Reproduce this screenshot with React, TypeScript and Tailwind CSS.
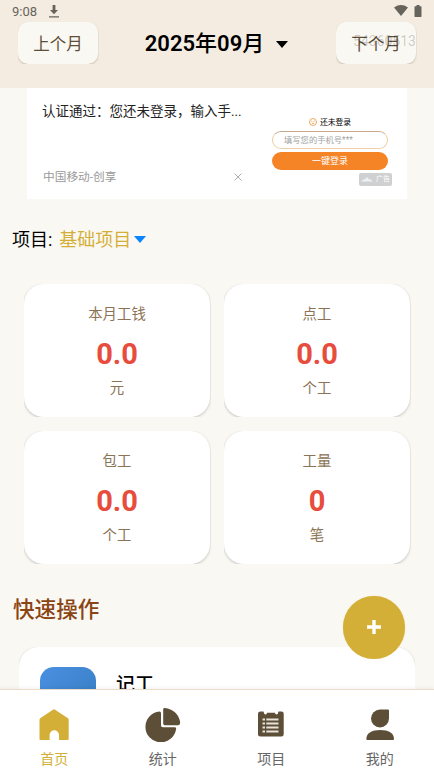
import React from 'react';

interface StatCardProps {
  title: string;
  value: string;
  unit: string;
}

interface TabItem {
  label: string;
  active?: boolean;
  icon: React.ReactNode;
}

const stats: StatCardProps[] = [
  { title: '本月工钱', value: '0.0', unit: '元' },
  { title: '点工', value: '0.0', unit: '个工' },
  { title: '包工', value: '0.0', unit: '个工' },
  { title: '工量', value: '0', unit: '笔' },
];

const HomeIcon = () => (
  <svg viewBox="0 0 36 36" className="w-9 h-9 fill-[#d4af37]">
    <path d="M17.300 3.400 Q18 2.900 18.700 3.400 L32 12.300 Q32.700 12.800 32.700 13.800 V33.300 Q32.700 34 32 34 H23 V29 A4.700 4.700 0 0 0 13.600 29 V34 H4.200 Q3.500 34 3.500 33.300 V13.800 Q3.500 12.800 4.200 12.300 Z" />
  </svg>
);

const PieIcon = () => (
  <svg viewBox="0 0 36 36" className="w-9 h-9 fill-[#5d4e37]">
    <path d="M14.500 5.600 Q16 5.600 16 7.200 V19.500 Q16 21.300 17.800 21.300 H29.500 Q31.500 21.300 31.100 23 A15.400 15.400 0 1 1 14.500 5.600 Z" />
    <path d="M18.200 3.300 Q18.200 1.700 19.800 1.900 A17 17 0 0 1 35.200 16.800 Q35.200 19.200 33.200 19.200 H19.800 Q18.200 19.200 18.200 17.600 Z" />
  </svg>
);

const NotesIcon = () => (
  <svg viewBox="0 0 36 36" className="w-9 h-9">
    <path
      fill="#5d4e37"
      d="M7.500 5.500 H10.500 Q11 8.500 12.500 8.500 Q14 8.500 14 6.700 H22 Q22 8.500 23.500 8.500 Q25 8.500 25.500 5.500 H28.500 Q30.700 5.500 30.700 7.700 V28 Q30.700 30.500 28.500 30.500 H7.500 Q5 30.500 5 28 V7.700 Q5 5.500 7.500 5.500 Z"
    />
    <path
      stroke="#e8e4da"
      strokeWidth="1.800"
      d="M9.500 13.500 H12 M13.300 13.500 H25.500 M9.500 17.500 H12 M13.300 17.500 H25.500 M9.500 21.500 H12 M13.300 21.500 H25.500 M9.500 25.500 H12 M13.300 25.500 H25.500"
    />
  </svg>
);

const UserIcon = () => (
  <svg viewBox="0 0 36 36" className="w-9 h-9 fill-[#5d4e37]">
    <path d="M18 3.500 H26 Q27 3.500 27 4.500 V12.500 A9 9 0 1 1 18 3.500 Z" />
    <path d="M4.300 33 C4.300 27 10 24 18.200 24 S32 27 32 33 Q32 34 31 34 H5.300 Q4.300 34 4.300 33 Z" />
  </svg>
);

const tabs: TabItem[] = [
  { label: '首页', active: true, icon: <HomeIcon /> },
  { label: '统计', icon: <PieIcon /> },
  { label: '项目', icon: <NotesIcon /> },
  { label: '我的', icon: <UserIcon /> },
];

const StatusBar = () => (
  <div className="h-[22px] flex items-center justify-between pl-3 pr-3 text-[#66635d]">
    <div className="flex items-center pt-px">
      <span className="text-[13px] leading-[21px]">9:08</span>
      <svg viewBox="0 0 10 13" className="w-2.5 h-[13px] ml-3" fill="currentColor">
        <path d="M3.600 0 H6.400 V5 H9 L5 9.200 L1 5 H3.600 Z M0 11.200 H10 V12.500 H0 Z" />
      </svg>
    </div>
    <div className="flex items-center gap-[6px] pb-px">
      <svg viewBox="0 0 14 11" className="w-3.5 h-[11px]" fill="currentColor">
        <path d="M0 2.500 Q7 -2.300 14 2.500 L7 11 Z" />
      </svg>
      <svg viewBox="0 0 8 12" className="w-2 h-3" fill="currentColor">
        <path d="M2.500 0 H5.500 V1.300 H7 Q7.500 1.300 7.500 2 V11.300 Q7.500 12 7 12 H1 Q0.500 12 0.500 11.300 V2 Q0.500 1.300 1 1.300 H2.500 Z" />
      </svg>
    </div>
  </div>
);

const MonthButton = ({ children }: { children: React.ReactNode }) => (
  <div className="w-[81px] h-[42px] overflow-hidden">
    <button className="relative w-20 h-[42px] pt-1 rounded-[10px] bg-[#faf8f3] text-[16.5px] text-[#5d4e37] shadow-[0_1px_2px_rgba(93,78,55,0.3)]">
      {children}
    </button>
  </div>
);

const AdBanner = () => (
  <div className="mx-[27px] h-[111px] bg-white flex justify-between">
    <div className="w-[216px] pl-[15px] flex flex-col justify-between">
      <p className="mt-3 text-[13.5px] leading-[22px] text-[#222] whitespace-nowrap">认证通过：您还未登录，输入手...</p>
      <div className="mb-3 pl-px flex items-center justify-between text-[#999]">
        <span className="text-[11.700px] leading-5">中国移动-创享</span>
        <svg viewBox="0 0 8 8" className="w-2 h-2 mr-px" stroke="#a5a5a5" strokeWidth="0.9">
          <path d="M0.500 0.500 L7.500 7.500 M7.500 0.500 L0.500 7.500" />
        </svg>
      </div>
    </div>
    <div className="w-[121px] mr-[14px] pt-7 flex flex-col">
      <div className="w-[116px] h-3 flex items-center justify-center gap-[3px] text-[7.800px] text-black">
        <svg viewBox="0 0 8 8" className="w-2 h-2" fill="none" stroke="#e9963f" strokeWidth="0.8">
          <circle cx="4" cy="4" r="3.500" />
          <path d="M2.200 3 L3.300 3.500 M5.800 3 L4.700 3.500 M2.800 5.700 Q4 4.500 5.200 5.700" />
        </svg>
        <span className="pt-px">还未登录</span>
      </div>
      <div className="mt-[3px] w-[116px] h-[18px] rounded-full border border-[#eccfa6] border-t-[#c9a98a] pl-[11px] text-[8.300px] leading-[17px] text-[#a3a3a3] whitespace-nowrap">
        填写您的手机号***
      </div>
      <div className="mt-[3px] w-[116px] h-[18px] rounded-full bg-[#f58426] text-center text-[9px] leading-[19px] text-white">
        一键登录
      </div>
      <div className="mt-[3px] ml-auto mr-px w-[33px] h-[13px] rounded-[2px] bg-[#cfd0d2] flex items-center justify-center gap-[3px] text-[7px] text-white">
        <svg viewBox="0 0 12 5" className="w-3 h-[5px]" fill="#eef0f1">
          <path d="M0 4.500 L3 2 L4 2.500 L6 0 L8 2.500 L9 2 L12 4.500 Z" />
        </svg>
        <span>广告</span>
      </div>
    </div>
  </div>
);

// the outer box trims the shadow so that it only shows around the corners
const StatCard: React.FC<StatCardProps> = ({ title, value, unit }) => (
  <div className="h-[133px] -mr-px pr-px overflow-hidden">
    <div className="h-[133px] rounded-[20px] bg-white flex flex-col items-center text-[#8b7355] shadow-[0_1px_3px_rgba(0,0,0,0.22)]">
      <span className="mt-[21px] text-[14.4px] leading-5">{title}</span>
      <span className="mt-3 text-[29px] leading-[34px] font-bold text-[#e74c3c]">{value}</span>
      <span className="mt-2 text-[14.4px] leading-5">{unit}</span>
    </div>
  </div>
);

export default function App() {
  return (
    <div className="relative w-[434px] h-[773px] overflow-hidden flex flex-col bg-[#faf8f3] font-['Roboto','Noto_Sans_CJK_SC',sans-serif]">
      <header className="h-[88px] shrink-0 bg-[#f4ece0]">
        <StatusBar />
        <div className="flex items-center justify-between pl-[18px] pr-[17px]">
          <MonthButton>上个月</MonthButton>
          <div className="pt-0.5 pr-0.5 flex items-center gap-3 text-[22px] leading-8 font-medium text-black">
            <div>
              <span className="font-semibold">2025</span>年<span className="font-semibold">09</span>月
            </div>
            <svg viewBox="0 0 12 7" className="w-3 h-[7px]">
              <path d="M0 0 H12 L6 7 Z" />
            </svg>
          </div>
          <MonthButton>
            下个月
            <span className="absolute right-0 top-[9px] text-[14px] leading-5 text-black/20">54360513</span>
          </MonthButton>
        </div>
      </header>

      <main className="flex-1 min-h-0 overflow-hidden">
        <AdBanner />

        <div className="mt-[26px] pl-3 h-7 flex items-center text-[18px] text-black">
          <span>项目:</span>
          <span className="ml-[7px] text-[#d4af37]">基础项目</span>
          <svg viewBox="0 0 12 7" className="w-3 h-[7px] ml-[3px] fill-[#0a84ff]">
            <path d="M0 0 H12 L6 7 Z" />
          </svg>
        </div>

        <div className="mt-[31px] px-6 grid grid-cols-2 gap-[14px]">
          {stats.map((stat) => (
            <StatCard key={stat.title} {...stat} />
          ))}
        </div>

        <h2 className="mt-[30px] pl-[13px] text-[21.6px] leading-8 font-medium text-[#8b4513]">快速操作</h2>

        <div className="mt-[21px] mx-[19px] overflow-hidden">
          <div className="h-[120px] rounded-[20px] bg-white pl-[21px] pt-5 flex items-start shadow-[0_1px_3px_rgba(0,0,0,0.22)]">
            <div className="w-14 h-14 rounded-[14px] bg-gradient-to-br from-[#4a90e2] to-[#357abd]" />
            <span className="ml-5 mt-1 text-[19px] leading-7 font-medium text-black">记工</span>
          </div>
        </div>
      </main>

      <nav className="h-[84px] shrink-0 border-t border-[#eadcc8] bg-white grid grid-cols-4 shadow-[0_-1px_4px_rgba(0,0,0,0.06)]">
        {tabs.map((tab) => (
          <div key={tab.label} className="flex flex-col items-center pt-4">
            {tab.icon}
            <span className={`mt-[7px] text-[14px] leading-5 ${tab.active ? 'text-[#d4af37]' : 'text-[#666]'}`}>
              {tab.label}
            </span>
          </div>
        ))}
      </nav>

      <button className="absolute left-[342.500px] top-[596px] w-[62.500px] h-[63px] pb-px rounded-full bg-[#d4af37] flex items-center justify-center shadow-[0_0_1px_rgba(212,175,55,0.5)]">
        <svg viewBox="0 0 14 14" className="w-3.5 h-3.5" stroke="white" strokeWidth="3.400">
          <path d="M7 0 V14 M0 7 H14" />
        </svg>
      </button>
    </div>
  );
}
